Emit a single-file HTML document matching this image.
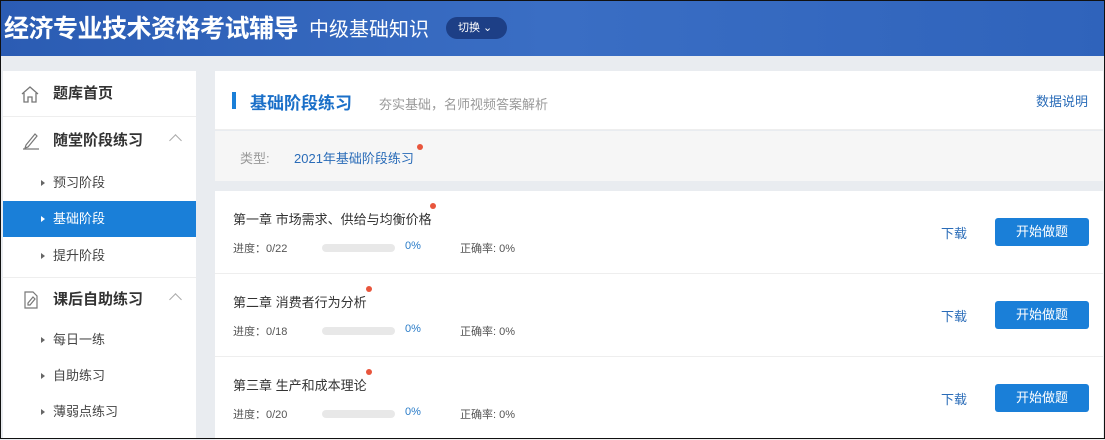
<!DOCTYPE html><html><head><meta charset="utf-8"><style>
*{margin:0;padding:0;box-sizing:border-box}
body{width:1105px;height:439px;overflow:hidden;background:#e9ecf0;font-family:"Liberation Sans","Noto Sans CJK SC",sans-serif;position:relative}
.fr{position:absolute;left:0;top:0;width:1105px;height:439px;border:1px solid #111;z-index:9;pointer-events:none}
.hd{position:absolute;left:0;top:0;width:1105px;height:56px;background:linear-gradient(90deg,#2b5cb3,#3a6ec4 50%,#2f63bb);color:#fff}
.t1{position:absolute;left:4px;top:9px;font-size:25px;font-weight:bold;letter-spacing:-0.5px}
.t2{position:absolute;left:309px;top:13px;font-size:20px}
.sw{position:absolute;left:446px;top:17px;width:61px;height:22px;border-radius:11px;background:#1d3f86;font-size:11px;line-height:22px;padding-left:12px}
.sb{position:absolute;left:3px;top:71px;width:193px;height:368px;background:#fff}
.it{position:absolute;left:0;width:193px;font-size:15px;color:#333;font-weight:bold}
.sub{position:absolute;left:0;width:193px;height:36px;line-height:36px;font-size:13px;color:#444;padding-left:50px}
.sub:before{content:"";position:absolute;left:38px;top:15px;border-left:4px solid #666;border-top:3px solid transparent;border-bottom:3px solid transparent}
.sel{background:#1a7fd8;color:#fff}.sel:before{border-left-color:#fff}
.main{position:absolute;left:215px;top:71px;width:888px;background:#fff}
.row{position:absolute;left:215px;width:888px;height:83px;background:#fff;border-bottom:1px solid #eee}
.rt{position:absolute;left:18px;top:18px;font-size:13px;color:#333}
.dot{position:absolute;width:6px;height:6px;border-radius:3px;background:#e8553c}
.pg{position:absolute;left:18px;top:49px;font-size:11px;color:#555}
.bar{position:absolute;left:107px;top:53px;width:73px;height:8px;border-radius:4px;background:#e8e8e8}
.pc{position:absolute;left:190px;top:49px;font-size:11px;color:#2a7cc8}
.ac{position:absolute;left:245px;top:49px;font-size:11px;color:#555}
.dl{position:absolute;left:726px;top:32px;font-size:13px;color:#2a6cb8}
.bt{position:absolute;left:780px;top:27px;width:94px;height:28px;border-radius:3px;background:#1a7fd8;color:#fff;font-size:13px;text-align:center;line-height:28px}
.chv{position:absolute;left:168px;top:18px;width:9px;height:9px;border-left:1px solid #aaa;border-top:1px solid #aaa;transform:rotate(45deg)}
</style></head><body>
<div class="fr"></div>
<div class="hd"><div class="t1">经济专业技术资格考试辅导</div><div class="t2">中级基础知识</div><div class="sw">切换 ⌄</div></div>
<div class="sb">
<div class="it" style="top:0;height:46px;line-height:46px;padding-left:50px;border-bottom:1px solid #eee"><svg style="position:absolute;left:17px;top:14px" width="20" height="18" viewBox="0 0 20 18" fill="none" stroke="#777" stroke-width="1.3"><path d="M2 9L10 2l8 7M4 8v9h4v-5h4v5h4V8"/></svg>题库首页</div>
<div class="it" style="top:47px;height:46px;line-height:46px;padding-left:50px"><svg style="position:absolute;left:18px;top:13px" width="20" height="20" viewBox="0 0 20 20" fill="none" stroke="#777" stroke-width="1.2"><path d="M5 14l9-11 2 2-9 11-3 1zM2 18h16"/></svg>随堂阶段练习<span class="chv"></span></div>
<div class="sub" style="top:94px">预习阶段</div>
<div class="sub sel" style="top:130px">基础阶段</div>
<div class="sub" style="top:167px">提升阶段</div>
<div style="position:absolute;top:206px;left:0;width:193px;border-top:1px solid #eee"></div>
<div class="it" style="top:206px;height:46px;line-height:46px;padding-left:50px"><svg style="position:absolute;left:18px;top:13px" width="20" height="20" viewBox="0 0 20 20" fill="none" stroke="#777" stroke-width="1.2"><path d="M4 2h8l4 4v12H4zM7 13l5-6 2 2-5 6-2 0z"/></svg>课后自助练习<span class="chv"></span></div>
<div class="sub" style="top:251px">每日一练</div>
<div class="sub" style="top:287px">自助练习</div>
<div class="sub" style="top:323px">薄弱点练习</div>
</div>
<div class="main" style="height:59px;border-bottom:1px solid #eee">
<div style="position:absolute;left:17px;top:21px;width:4px;height:17px;background:#1a7fd8"></div>
<div style="position:absolute;left:35px;top:18px;font-size:17px;font-weight:bold;color:#1a6fc8">基础阶段练习</div>
<div style="position:absolute;left:164px;top:23px;font-size:13px;color:#999">夯实基础，名师视频答案解析</div>
<div style="position:absolute;left:821px;top:20px;font-size:13px;color:#2a6cb8">数据说明</div>
</div>
<div class="main" style="top:131px;height:50px;background:#f6f6f6">
<div style="position:absolute;left:25px;top:17px;font-size:13px;color:#999">类型:</div>
<div style="position:absolute;left:79px;top:17px;font-size:13px;color:#2a6cb8">2021年基础阶段练习</div>
<div class="dot" style="left:202px;top:13px"></div></div>
<div class="row" style="top:191px"><div class="rt">第一章 市场需求、供给与均衡价格</div><div class="dot" style="left:215px;top:12px"></div><div class="pg">进度：0/22</div><div class="bar"></div><div class="pc">0%</div><div class="ac">正确率: 0%</div><div class="dl">下载</div><div class="bt">开始做题</div></div>
<div class="row" style="top:274px"><div class="rt">第二章 消费者行为分析</div><div class="dot" style="left:151px;top:12px"></div><div class="pg">进度：0/18</div><div class="bar"></div><div class="pc">0%</div><div class="ac">正确率: 0%</div><div class="dl">下载</div><div class="bt">开始做题</div></div>
<div class="row" style="top:357px"><div class="rt">第三章 生产和成本理论</div><div class="dot" style="left:151px;top:12px"></div><div class="pg">进度：0/20</div><div class="bar"></div><div class="pc">0%</div><div class="ac">正确率: 0%</div><div class="dl">下载</div><div class="bt">开始做题</div></div>
</body></html>
